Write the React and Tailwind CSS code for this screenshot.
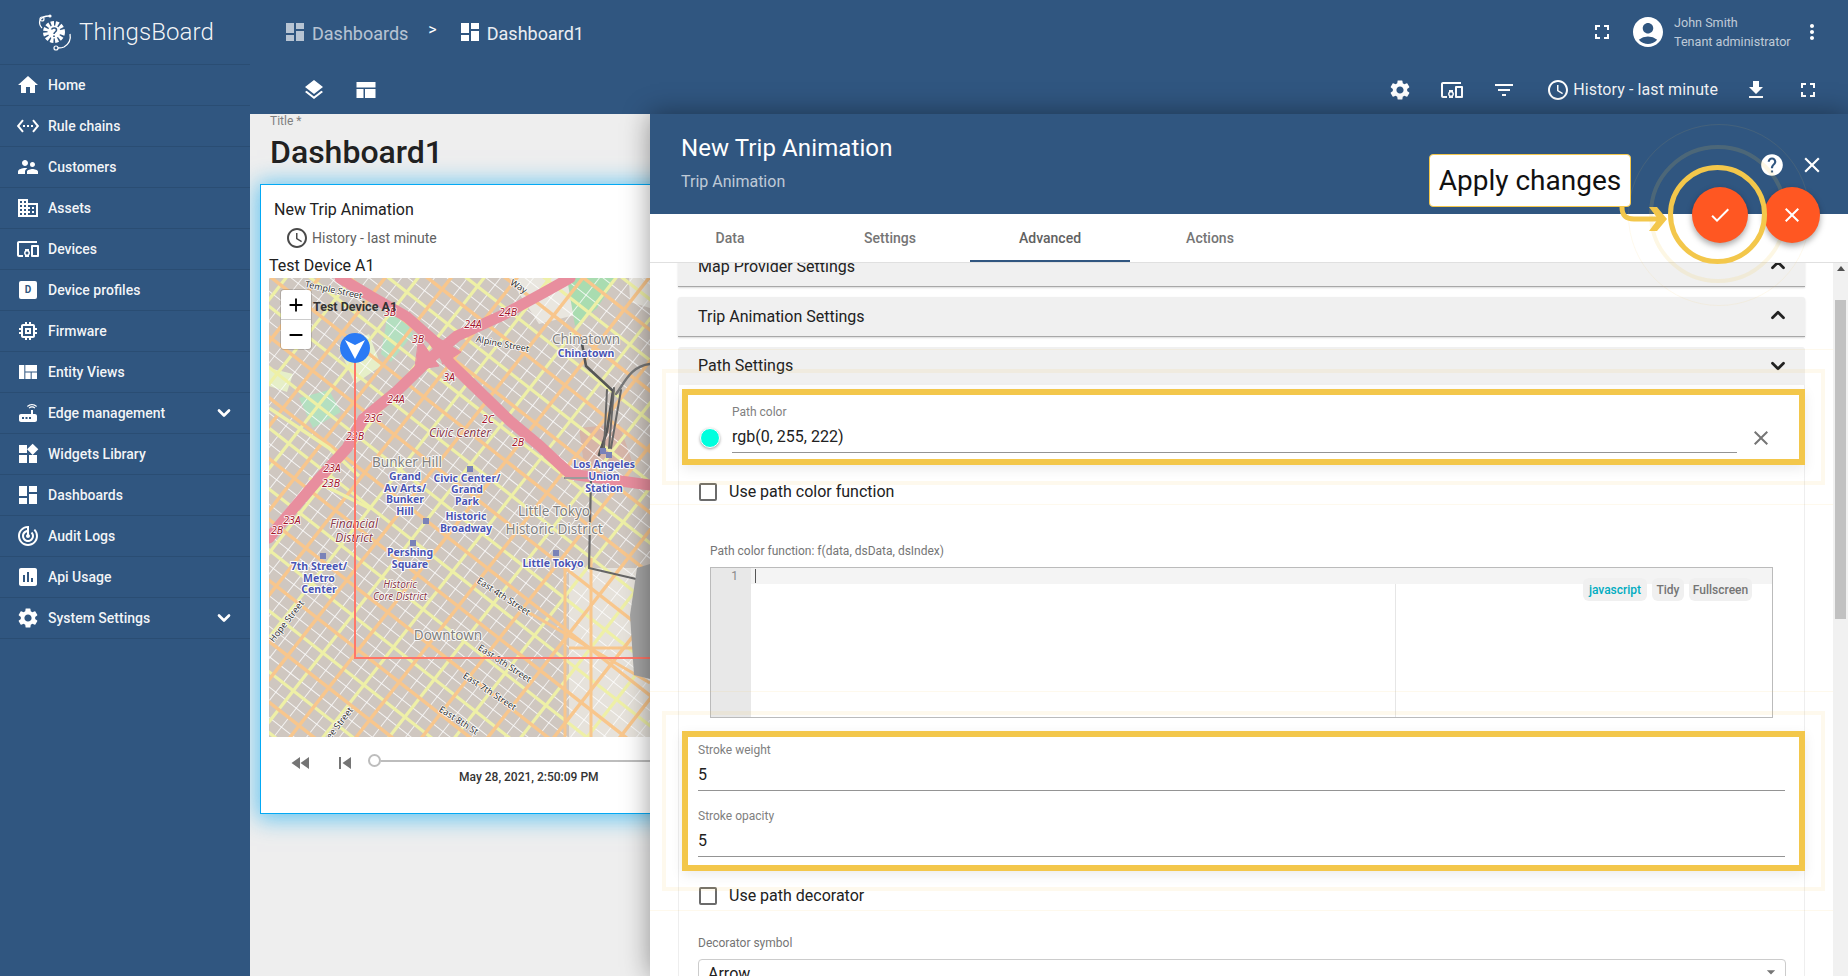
import React from 'react';
import {
  MdHome, MdSettingsEthernet, MdSupervisorAccount, MdDomain, MdDevicesOther, MdMemory, MdViewQuilt,
  MdRouter, MdWidgets, MdDashboard, MdTrackChanges, MdInsertChart, MdSettings,
  MdLayers, MdFullscreen, MdAccountCircle, MdMoreVert, MdFilterList, MdAccessTime,
  MdFileDownload, MdHelp, MdClose, MdCheck, MdFastRewind, MdSkipPrevious, MdAdd, MdRemove, MdArrowDropDown,
} from 'react-icons/md';
import { ChevronDown, ChevronUp } from 'lucide-react';

const DeviceProfileIcon = () => (
  <span className="flex h-[18px] w-[18px] items-center justify-center rounded-[2px] bg-white text-[10px] font-bold leading-none text-[#305680]">D</span>
);

const menu = [
  { label: 'Home', Icon: MdHome },
  { label: 'Rule chains', Icon: MdSettingsEthernet },
  { label: 'Customers', Icon: MdSupervisorAccount },
  { label: 'Assets', Icon: MdDomain },
  { label: 'Devices', Icon: MdDevicesOther },
  { label: 'Device profiles', custom: true },
  { label: 'Firmware', Icon: MdMemory },
  { label: 'Entity Views', Icon: MdViewQuilt },
  { label: 'Edge management', Icon: MdRouter, arrow: true },
  { label: 'Widgets Library', Icon: MdWidgets },
  { label: 'Dashboards', Icon: MdDashboard },
  { label: 'Audit Logs', Icon: MdTrackChanges },
  { label: 'Api Usage', Icon: MdInsertChart },
  { label: 'System Settings', Icon: MdSettings, arrow: true },
];

const Logo = () => (
  <svg width="38" height="40" viewBox="0 0 38 40" fill="none" className="shrink-0">
    <circle cx="18" cy="20" r="8.5" stroke="#fff" strokeWidth="5" strokeDasharray="3 1.6" />
    <circle cx="18" cy="20" r="6.5" fill="#fff" />
    <path d="M15.5 17.5c1-2 5-2 5 .5 0 2-2.5 2-2.5 4M18 23.5v1.5" stroke="#305680" strokeWidth="1.6" />
    <path d="M4 8c2-3 6-4 9-4M4 8c-1 3 0 6 2 8M34 22c1 5-1 10-6 13-2 1-4 1-6 1" stroke="#fff" strokeWidth="1.3" />
    <circle cx="6" cy="7" r="2" stroke="#fff" strokeWidth="1.2" />
    <circle cx="14" cy="4" r="1.6" fill="#fff" />
    <circle cx="20" cy="36" r="2" stroke="#fff" strokeWidth="1.2" />
  </svg>
);

const WebIcon = () => (
  <svg width="24" height="24" viewBox="0 0 24 24" fill="#fff">
    <rect x="2.5" y="4" width="19" height="5.5" />
    <rect x="2.5" y="11" width="7" height="9" />
    <rect x="11" y="11" width="10.5" height="9" />
  </svg>
);

const range = (from, to, step) => {
  const out = [];
  for (let v = from; v <= to; v += step) out.push(v);
  return out;
};

const placeLabels = [
  ['Chinatown', 317, 66], ['Bunker Hill', 138, 189], ['Little Tokyo', 285, 238], ['Historic District', 285, 256], ['Downtown', 179, 362],
];
const stationLabels = [
  ['Chinatown', 317, 79], ['Grand', 136, 202], ['Av Arts/', 136, 214], ['Bunker', 136, 225], ['Hill', 136, 237],
  ['Civic Center/', 198, 204], ['Grand', 198, 215], ['Park', 198, 227], ['Historic', 197, 242], ['Broadway', 197, 254],
  ['Los Angeles', 335, 190], ['Union', 335, 202], ['Station', 335, 214], ['Little Tokyo', 284, 289],
  ['Pershing', 141, 278], ['Square', 141, 290], ['7th Street/', 50, 292], ['Metro', 50, 304], ['Center', 50, 315],
];
const districtLabels = [
  ['Civic Center', 191, 159, 12], ['Financial', 85, 250, 12], ['District', 85, 264, 12], ['Historic', 131, 310, 10], ['Core District', 131, 322, 10],
];
const shields = [
  ['3B', 121, 38], ['24B', 239, 38], ['24A', 204, 50], ['3B', 149, 65], ['3A', 180, 103], ['24A', 127, 125], ['23C', 104, 144], ['2C', 219, 145],
  ['2B', 249, 168], ['23B', 86, 162], ['23A', 63, 194], ['23B', 62, 209], ['23A', 23, 246], ['2B', 8, 256],
];
const streets = [
  ['Temple Street', 64, 15, 12], ['Alpine Street', 233, 69, 11], ['Way', 248, 11, 32], ['East 4th Street', 233, 321, 33], ['East 6th Street', 234, 388, 33],
  ['East 7th Street', 219, 416, 33], ['East 8th St', 188, 445, 33], ['Hope Street', 20, 345, -52], ['ee Street', 73, 447, -52],
];
const squares = [[198, 188], [331, 170], [337, 174], [154, 240], [141, 262], [51, 275], [284, 272]];

const CityMap = () => (
  <svg width="381" height="459" viewBox="0 0 381 459" className="block">
    <rect width="381" height="459" fill="#cfc7c0" />
    <rect x="300" y="290" width="81" height="169" fill="#e6e2db" />
    <path d="M118 40l12-8 14 24-22 28-10-8zM30 120l30-8 12 22-28 16z" fill="#b4dfc0" />
    <path d="M70 70l30-14 12 32-26 18zM0 90l24 6-6 18-18-6z" fill="#e6efc8" />
    <path d="M240 0h80l-10 36-40 10zM360 0h21v30l-20-6z" fill="#e9e6df" />
    <path d="M298 0h50l-20 30-22 18z" fill="#a9dcb0" />
    <path d="M310 150l40-4 14 40-48 8z" fill="#d6b5a8" />
    <g transform="rotate(38 190 230)">
      {range(-340, 800, 12).map((v) => <line key={`a${v}`} x1="-400" x2="800" y1={v} y2={v} stroke="#fff" strokeWidth="1" opacity="0.8" />)}
      {range(-400, 800, 13).map((v) => <line key={`b${v}`} y1="-400" y2="800" x1={v} x2={v} stroke="#fff" strokeWidth="1" opacity="0.75" />)}
      {range(-340, 800, 48).map((v) => <line key={`c${v}`} x1="-400" x2="800" y1={v} y2={v} stroke="#eef0a6" strokeWidth="3.2" />)}
      {range(-400, 800, 52).map((v) => <line key={`d${v}`} y1="-400" y2="800" x1={v} x2={v} stroke="#eef0a6" strokeWidth="3.2" />)}
      {range(-316, 800, 48).map((v) => <line key={`e${v}`} x1="-400" x2="800" y1={v} y2={v} stroke="#f8c68c" strokeWidth="3.4" />)}
      {range(-374, 800, 52).map((v) => <line key={`f${v}`} y1="-400" y2="800" x1={v} x2={v} stroke="#f8c68c" strokeWidth="3.4" />)}
    </g>
    <path d="M322 280v179M296 290v169M300 370h81M252 330l129 75" stroke="#f8c68c" strokeWidth="3" fill="none" />
    <path d="M0 130l60 40 30 28M40 200l60 30" stroke="#eef0a6" strokeWidth="3.5" fill="none" />
    <g fill="none" strokeLinejoin="round" strokeLinecap="round">
      <path d="M71 0l32 19 35 20 26 23 17 23 30 29 30 29 30 25 30 28 80 11" stroke="#e88e9e" strokeWidth="11" />
      <path d="M301 0l-25 14-42 23-46 21-24 20-36 35-34 28-16 29-30 33-24 28-24 29" stroke="#e88e9e" strokeWidth="11" />
      <path d="M150 60l20 28-24 4zM166 58l26 16-18 12z" fill="#e88e9e" stroke="#e88e9e" />
      <path d="M312 60l5 28 27 25-6 40-8 24" stroke="#555" strokeWidth="2.6" />
      <path d="M345 110l-5 60M352 112l-10 58M338 112l-3 58" stroke="#666" strokeWidth="2" />
      <path d="M381 86c-20 2-26 20-34 30" stroke="#777" strokeWidth="2.4" />
      <path d="M296 200h26l-2 90 60 14" stroke="#666" strokeWidth="2.2" />
      <path d="M296 200h26" stroke="#fff" strokeWidth="0.7" />
    </g>
    <path d="M368 290l13-4v115l-16-4-4-60z" fill="#a5a5a5" />
    {squares.map(([x, y]) => <rect key={`${x}-${y}`} x={x} y={y} width="6" height="6" fill="#7a82b8" />)}
    <g fontFamily="'Noto Sans', sans-serif" textAnchor="middle" paintOrder="stroke" stroke="#fff" strokeWidth="2" strokeLinejoin="round">
      {placeLabels.map(([t, x, y]) => <text key={`${t}${y}`} x={x} y={y} fontSize="13.5" fill="#808080" strokeOpacity="0.85">{t}</text>)}
      {stationLabels.map(([t, x, y]) => <text key={`${t}${y}`} x={x} y={y} fontSize="10.5" fontWeight="700" fill="#4a55b3">{t}</text>)}
      {districtLabels.map(([t, x, y, s]) => <text key={`${t}${y}`} x={x} y={y} fontSize={s} fontStyle="italic" fill="#8a3b4a" strokeWidth="1.5">{t}</text>)}
      {shields.map(([t, x, y]) => <text key={`${t}${x}`} x={x} y={y} fontSize="10.5" fontStyle="italic" fill="#a3162c" strokeWidth="1.5">{t}</text>)}
      {streets.map(([t, x, y, r]) => <text key={t} x={x} y={y} fontSize="9" fill="#2f2f2f" strokeWidth="1.5" transform={`rotate(${r} ${x} ${y})`}>{t}</text>)}
    </g>
    <path d="M86 80v300h295" fill="none" stroke="#ff7668" strokeWidth="2" />
    <circle cx="86" cy="70" r="15" fill="#2a7af5" />
    <path d="M76 62l10 5 10-5-10 19z" fill="#fff" />
    <text x="44" y="33" fontFamily="Roboto, sans-serif" fontSize="12.5" fontWeight="700" fill="#333">Test Device A1</text>
  </svg>
);

const Panel = ({ title }) => (
  <div className="flex h-10 items-center justify-between rounded-t-[3px] border-b border-[#a8a8a8] bg-[#f0f0f0] pl-5 pr-4 shadow-[0_1px_2px_rgba(0,0,0,0.15)]">
    <span className="text-[16px] text-[#212121]">{title}</span>
    <ChevronUp size={22} strokeWidth={3} className="-mt-1 text-[#222]" />
  </div>
);

const Highlight = ({ children }) => (
  <div className="relative -mr-px ml-[3px] border-[6px] border-[#f3c74b] bg-white shadow-[0_4px_12px_rgba(0,0,0,0.08)]">
    <div className="pointer-events-none absolute -inset-[26px] border-4 border-[#f3c74b]/10" />
    <div className="pointer-events-none absolute -inset-[46px] border border-[#f3c74b]/10" />
    {children}
  </div>
);

const Checkbox = ({ label, className }) => (
  <div className={`flex h-[18px] items-center pl-5 ${className}`}>
    <span className="h-[18px] w-[18px] rounded-[2px] border-2 border-[#6b6b6b]" />
    <span className="ml-3 text-[16px] text-[#212121]">{label}</span>
  </div>
);

const NumberField = ({ label, value, className }) => (
  <div className={className}>
    <div className="text-[12px] leading-[14px] text-[#808080]">{label}</div>
    <div className="mt-2 text-[16px] leading-5 text-[#212121]">{value}</div>
    <div className="mt-[5px] border-b border-[#949494]" />
  </div>
);

export default function App() {
  return (
    <div className="relative flex h-screen w-screen overflow-hidden bg-[#eee] font-['Roboto',sans-serif]">
      {/* Sidebar */}
      <aside className="z-10 w-[250px] shrink-0 bg-[#305680] text-white">
        <div className="flex h-[65px] items-center border-b border-[#2a4d73] pl-[36px]">
          <Logo />
          <span className="ml-[5px] text-[24px] font-light tracking-[0.1px] text-white/95">ThingsBoard</span>
        </div>
        {menu.map(({ label, Icon, custom, arrow }) => (
          <div key={label} className="flex h-[41px] items-center border-b border-[#2a4d73] pl-4 pr-[16px]">
            <span className="flex w-6 justify-center">{custom ? <DeviceProfileIcon /> : <Icon className="text-[24px]" />}</span>
            <span className="ml-2 flex-1 text-[14px] font-medium text-white/95">{label}</span>
            {arrow && <ChevronDown size={20} strokeWidth={3.2} />}
          </div>
        ))}
      </aside>

      <main className="min-w-0 flex-1">
        {/* Top bars */}
        <header className="h-[114px] bg-[#305680] text-white">
          <div className="flex h-16 items-center pl-[33px] pr-[24px]">
            <MdDashboard className="text-[24px] text-white/65" />
            <span className="ml-[5px] mt-[3px] text-[18px] text-white/65">Dashboards</span>
            <span className="ml-5 -mt-1 text-[16px]">&gt;</span>
            <MdDashboard className="ml-[21px] text-[24px]" />
            <span className="ml-[5px] mt-[3px] text-[18px] text-white/90">Dashboard1</span>
            <MdFullscreen className="ml-auto text-[24px]" />
            <MdAccountCircle className="ml-4 text-[36px]" />
            <div className="ml-2 w-[118px] text-[12.6px] leading-[19px] text-white/70">
              <div>John Smith</div>
              <div className="whitespace-nowrap">Tenant administrator</div>
            </div>
            <MdMoreVert className="ml-2 text-[24px]" />
          </div>
          <div className="flex h-[50px] items-center pt-[1px] pl-[52px] pr-[28px]">
            <MdLayers className="text-[24px]" />
            <span className="ml-7"><WebIcon /></span>
            <MdSettings className="ml-auto text-[24px]" />
            <MdDevicesOther className="ml-7 text-[24px]" />
            <MdFilterList className="ml-7 text-[24px]" />
            <MdAccessTime className="ml-[30px] text-[24px]" />
            <span className="ml-[3px] whitespace-nowrap text-[16px] tracking-[0.1px] text-white/95">History - last minute</span>
            <MdFileDownload className="ml-[26px] text-[24px]" />
            <MdFullscreen className="ml-7 text-[24px]" />
          </div>
        </header>

        {/* Dashboard */}
        <div className="pl-[10px]">
          <div className="pl-[10px] text-[12px] leading-[14px] text-[#808080]">Title *</div>
          <div className="mt-[5px] pl-[10px] text-[32px] font-medium leading-[38px] text-[#212121]">Dashboard1</div>
          <div className="mt-[13px] h-[630px] w-[640px] border border-[#03a9f4] bg-white shadow-[0_2px_22px_3px_rgba(3,169,244,0.6)]">
            <div className="mt-[15px] pl-[13px] text-[16px] leading-5 text-[#212121]">New Trip Animation</div>
            <div className="mt-[7px] flex h-[22px] items-center pl-[24px] text-[14px] text-[#616161]">
              <MdAccessTime className="text-[24px] text-[#4a4a4a]" />
              <span className="ml-[3px]">History - last minute</span>
            </div>
            <div className="mt-[7px] pl-2 text-[16px] leading-5 text-[#212121]">Test Device A1</div>
            <div className="relative ml-2 mt-[2px] w-[381px]">
              <CityMap />
              <div className="absolute left-3 top-3 w-[30px] overflow-hidden rounded-[3px] bg-white shadow-[0_0_0_1px_rgba(0,0,0,0.15)]">
                <div className="flex h-[30px] items-center justify-center border-b border-[#ccc]"><MdAdd className="text-[22px] text-black" /></div>
                <div className="flex h-[29px] items-center justify-center"><MdRemove className="text-[22px] text-black" /></div>
              </div>
            </div>
            <div className="mt-[14px] flex h-6 items-center pl-[28px] text-[#757575]">
              <MdFastRewind className="text-[24px]" />
              <MdSkipPrevious className="ml-[20px] text-[24px]" />
              <span className="relative z-10 -mt-[5px] ml-[11px] h-[13px] w-[13px] rounded-full border-2 border-[#bdbdbd] bg-white" />
              <span className="-mt-[5px] h-[2px] flex-1 bg-[#bdbdbd]" />
            </div>
            <div className="-mt-[5px] pl-[198px] text-[12px] font-medium leading-[14px] text-[#333]">May 28, 2021, 2:50:09 PM</div>
          </div>
        </div>
      </main>

      {/* Widget editor drawer */}
      <section className="absolute bottom-0 left-[650px] right-0 top-[114px] z-20 flex flex-col bg-white shadow-[0_0_26px_rgba(0,0,0,0.4)]">
        <div className="h-[100px] shrink-0 bg-[#305680] pl-[31px] pt-[18px] text-white">
          <div className="text-[24px] leading-8 tracking-[0.1px]">New Trip Animation</div>
          <div className="mt-[8px] text-[16px] leading-5 text-white/70">Trip Animation</div>
        </div>
        <nav className="flex h-[49px] shrink-0 border-b border-[#e0e0e0] text-[14px] font-medium text-[#757575]">
          {['Data', 'Settings', 'Advanced', 'Actions'].map((tab) => (
            <div key={tab} className={`flex h-12 w-40 items-center justify-center ${tab === 'Advanced' ? 'border-b-2 border-[#305680] pt-[2px] text-[#616161]' : ''}`}>{tab}</div>
          ))}
        </nav>
        <div className="flex min-h-0 flex-1">
          <div className="min-w-0 flex-1 overflow-hidden">
            <div className="-mt-4 ml-7 w-[1127px]">
              <Panel title="Map Provider Settings" />
              <div className="mt-[10px]"><Panel title="Trip Animation Settings" /></div>
              <div className="mt-[10px] flex h-[38px] items-center justify-between rounded-t-[3px] bg-[#f0f0f0] pl-5 pr-4">
                <span className="text-[16px] text-[#212121]">Path Settings</span>
                <ChevronDown size={22} strokeWidth={3} className="text-[#222]" />
              </div>
              <div className="border-x border-[#eee] pt-1">
                <Highlight>
                  <div className="flex h-[64px]">
                    <div className="ml-3 mt-[33px] h-5 w-5 rounded-full border border-white bg-[#00ffde] shadow-[0_1px_3px_rgba(0,0,0,0.4)]" />
                    <div className="ml-[12px] flex-1 pt-[10px]">
                      <div className="text-[12px] leading-[14px] text-[#808080]">Path color</div>
                      <div className="mt-2 text-[16px] leading-5 text-[#212121]">rgb(0, 255, 222)</div>
                      <div className="mt-[5px] border-b border-[#949494]" />
                    </div>
                    <div className="w-[62px] pl-[12px] pt-[31px]"><MdClose className="text-[24px] text-[#757575]" /></div>
                  </div>
                </Highlight>
                <Checkbox label="Use path color function" className="mt-[18px]" />
                <div className="mt-[43px] pl-[31px] text-[12px] leading-[14px] text-[#757575]">Path color function: f(data, dsData, dsIndex)</div>
                <div className="relative ml-[31px] mt-[9px] flex h-[151px] w-[1063px] border border-[#bbb]">
                  <div className="w-10 bg-[#e8e8e8] pr-[13px] pt-[1px] text-right text-[12px] leading-[15px] text-[#8a8a8a]">1</div>
                  <div className="relative flex-1">
                    <div className="flex h-4 items-center bg-[#f4f4f4] pl-1"><span className="h-[14px] w-px bg-[#555]" /></div>
                    <div className="absolute bottom-0 left-[644px] top-4 w-px bg-[#e6e6e6]" />
                  </div>
                  <div className="absolute right-5 top-[10px] flex gap-[5px] text-[12px] font-medium text-[#757575]">
                    <span className="flex h-[23px] w-16 items-center justify-center rounded-md bg-[#f0f0f0] text-[#00acc1]">javascript</span>
                    <span className="flex h-[23px] w-8 items-center justify-center rounded-md bg-[#f0f0f0]">Tidy</span>
                    <span className="flex h-[23px] w-[63px] items-center justify-center rounded-md bg-[#f0f0f0]">Fullscreen</span>
                  </div>
                </div>
                <div className="mt-[13px]">
                  <Highlight>
                    <div className="h-[128px] pl-[10px] pr-[14px] pt-[6px]">
                      <NumberField label="Stroke weight" value="5" />
                      <NumberField label="Stroke opacity" value="5" className="mt-[18px]" />
                    </div>
                  </Highlight>
                </div>
                <Checkbox label="Use path decorator" className="mt-[16px]" />
                <div className="mt-[31px] pl-[19px] text-[12px] leading-[14px] text-[#757575]">Decorator symbol</div>
                <div className="ml-[19px] mt-[9px] flex h-10 w-[1088px] items-start justify-between rounded border border-[#ccc] pl-[9px] pr-1 pt-[2px] text-[16px] text-[#212121]">
                  <span>Arrow</span>
                  <MdArrowDropDown className="text-[20px] text-[#757575]" />
                </div>
              </div>
            </div>
          </div>
          {/* Scrollbar */}
          <div className="relative w-[15px] shrink-0 bg-[#f1f1f1]">
            <div className="absolute left-1/2 top-[3px] h-0 w-0 -translate-x-1/2 border-x-4 border-b-[5px] border-x-transparent border-b-[#505050]" />
            <div className="ml-[2px] mt-[37px] h-[319px] w-[11px] bg-[#c1c1c1]" />
          </div>
        </div>
      </section>

      {/* Help tour overlay */}
      <MdHelp className="absolute left-[1759px] top-[152px] z-30 text-[26px] text-white" />
      <MdClose className="absolute left-[1799px] top-[152px] z-30 text-[26px] text-white" />
      <div className="absolute left-[1628px] top-[124px] z-30 h-[182px] w-[182px] rounded-full border border-[#f3c74b]/10" />
      <div className="absolute left-[1649px] top-[145px] z-30 h-[138px] w-[138px] rounded-full border-4 border-[#f3c74b]/15" />
      <button className="absolute left-[1764px] top-[187px] z-30 flex h-14 w-14 items-center justify-center rounded-full bg-[#ff5722] text-white shadow-[0_3px_6px_rgba(0,0,0,0.35)]">
        <MdClose className="text-[24px]" />
      </button>
      <button className="absolute left-[1692px] top-[187px] z-30 flex h-14 w-14 items-center justify-center rounded-full bg-[#ff5722] text-white shadow-[0_3px_6px_rgba(0,0,0,0.35)]">
        <MdCheck className="text-[24px]" />
      </button>
      <div className="absolute left-[1668px] top-[165px] z-30 h-[99px] w-[99px] rounded-full border-[5px] border-[#f3c74b]" />
      <div className="absolute left-[1429px] top-[154px] z-30 flex h-[53px] w-[202px] items-center justify-center rounded-[4px] border border-[#f3c74b] bg-white pt-[1px] text-[28px] text-[#111]">Apply changes</div>
      <svg className="absolute left-[1615px] top-[205px] z-30" width="56" height="30" viewBox="0 0 56 30" fill="none">
        <path d="M7 2c0 9 4 12 12 12h24" stroke="#f3c74b" strokeWidth="5" />
        <path d="M34 2h8l10 12-10 12h-8l9-12z" fill="#f3c74b" />
      </svg>
    </div>
  );
}
